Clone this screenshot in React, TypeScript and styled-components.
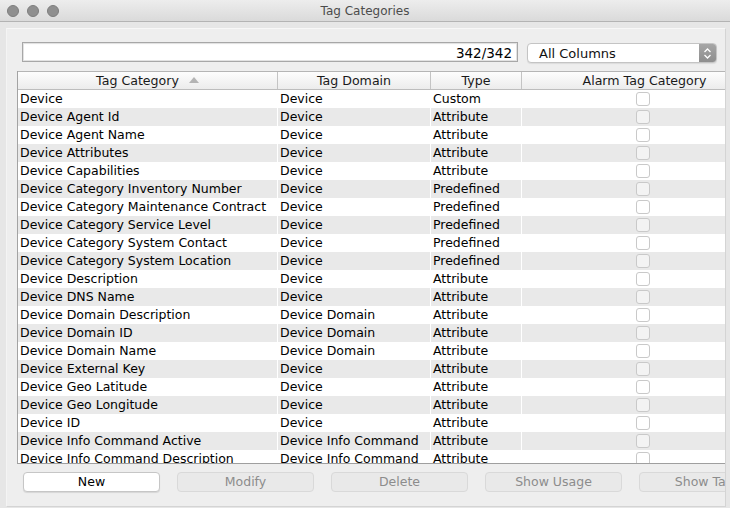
import React from 'react'
import styled, { createGlobalStyle } from 'styled-components'

const GlobalStyle = createGlobalStyle`
  html, body {
    margin: 0;
    padding: 0;
  }
  body {
    width: 730px;
    height: 508px;
    overflow: hidden;
    background: #e6e6e6;
    font-family: "DejaVu Sans", "Liberation Sans", sans-serif;
    -webkit-font-smoothing: antialiased;
  }
`

const Window = styled.div`
  width: 730px;
  height: 508px;
  display: flex;
  flex-direction: column;
`

const TitleBar = styled.div`
  height: 22px;
  box-sizing: border-box;
  flex-shrink: 0;
  position: relative;
  display: flex;
  align-items: center;
  justify-content: center;
  background: linear-gradient(#ededed, #dadada);
  border-bottom: 1px solid #b3b3b3;
`

const Lights = styled.div`
  position: absolute;
  left: 7px;
  top: 5px;
  display: flex;
  gap: 8px;
`

const Light = styled.span`
  width: 12px;
  height: 12px;
  border-radius: 50%;
  box-sizing: border-box;
  background: #8f8f8f;
  border: 1px solid #7d7d7d;
`

const Title = styled.div`
  font-size: 12px;
  color: #4c4c4c;
  margin-top: 1px;
`

const Body = styled.div`
  flex: 1;
  padding: 6px 4px 1px 6px;
  display: flex;
`

const Panel = styled.div`
  flex: 1;
  min-width: 0;
  background: #eeeeee;
  border: 1px solid #d4d4d4;
  border-top-color: #f7f7f7;
  border-left-color: #f4f4f4;
  padding: 13px 0 0 10px;
  overflow: hidden;
  display: flex;
  flex-direction: column;
`

const SearchRow = styled.div`
  display: flex;
  align-items: flex-start;
  gap: 9px;
  margin-left: 5px;
  height: 21px;
  flex-shrink: 0;
`

const SearchField = styled.div`
  width: 496px;
  height: 20px;
  box-sizing: border-box;
  background: #fff;
  border: 1px solid #a7a7a7;
  box-shadow: inset 0 0 0 1px #e2e2e2, inset 0 1px 1px rgba(0, 0, 0, 0.12);
  display: flex;
  align-items: center;
  justify-content: flex-end;
  padding: 1px 5px 0 0;
  font-size: 13.5px;
  color: #000;
`

const Select = styled.div`
  width: 190px;
  height: 20px;
  margin-top: 1px;
  box-sizing: border-box;
  background: #fff;
  border: 1px solid #c4c4c4;
  border-radius: 4px;
  box-shadow: 0 1px 1px rgba(0, 0, 0, 0.08);
  display: flex;
  align-items: center;
  overflow: hidden;
`

const SelectLabel = styled.span`
  flex: 1;
  padding-left: 11px;
  font-size: 13px;
  color: #111;
`

const Stepper = styled.span`
  width: 17px;
  align-self: stretch;
  background: linear-gradient(#a6a6a6, #8e8e8e);
  display: flex;
  align-items: center;
  justify-content: center;
`

const Table = styled.div`
  margin-top: 8px;
  height: 392px;
  flex-shrink: 0;
  border-left: 1px solid #a3a3a3;
  border-bottom: 1px solid #9f9f9f;
  display: flex;
  flex-direction: column;
  overflow: hidden;
`

const cols = '260px 153px 91px 246px'

const HeaderRow = styled.div`
  display: grid;
  grid-template-columns: ${cols};
  height: 19px;
  box-sizing: border-box;
  flex-shrink: 0;
  background: linear-gradient(#fdfdfd, #ececec);
  border-top: 1px solid #b5b5b5;
  border-bottom: 1px solid #bdbdbd;
`

const HeaderCell = styled.div`
  display: flex;
  align-items: center;
  justify-content: center;
  gap: 10px;
  font-size: 12.6px;
  color: #1a1a1a;
  border-right: 1px solid #c4c4c4;
  white-space: nowrap;
`

const SortArrow = styled.span`
  width: 0;
  height: 0;
  border-left: 5px solid transparent;
  border-right: 5px solid transparent;
  border-bottom: 6px solid #b4b4b4;
  margin-bottom: 1px;
`

const Rows = styled.div`
  flex: 1;
  overflow: hidden;
  background: #fff;
`

const Row = styled.div<{ $striped: boolean }>`
  display: grid;
  grid-template-columns: ${cols};
  height: 18px;
  background: ${({ $striped }) => ($striped ? '#e9e9e9' : '#ffffff')};
`

const Cell = styled.div`
  display: flex;
  align-items: center;
  padding: 0 0 2px 2px;
  font-size: 12.5px;
  color: #000;
  white-space: nowrap;
  overflow: hidden;
  border-right: 1px solid #fff;
`

const CheckCell = styled(Cell)`
  justify-content: center;
  padding: 0;
`

const CheckBox = styled.span<{ $striped: boolean }>`
  width: 14px;
  height: 14px;
  box-sizing: border-box;
  border-radius: 3px;
  border: 1px solid #c9c9c9;
  background: ${({ $striped }) => ($striped ? '#f3f3f3' : '#ffffff')};
  margin-left: -3px;
`

const ButtonRow = styled.div`
  display: flex;
  gap: 17px;
  margin: 8px 0 0 6px;
  flex-shrink: 0;
`

const Button = styled.div<{ $disabled?: boolean }>`
  width: 137px;
  height: 20px;
  flex-shrink: 0;
  box-sizing: border-box;
  border-radius: 4px;
  display: flex;
  align-items: center;
  justify-content: center;
  padding-bottom: 1px;
  font-size: 12.5px;
  white-space: nowrap;
  background: ${({ $disabled }) => ($disabled ? '#e9e9e9' : '#ffffff')};
  color: ${({ $disabled }) => ($disabled ? '#8c8c8c' : '#000000')};
  border: 1px solid ${({ $disabled }) => ($disabled ? '#d9d9d9' : '#c6c6c6')};
  box-shadow: ${({ $disabled }) => ($disabled ? 'none' : '0 1px 1px rgba(0,0,0,0.1)')};
`

const rows: [string, string, string][] = [
  ['Device', 'Device', 'Custom'],
  ['Device Agent Id', 'Device', 'Attribute'],
  ['Device Agent Name', 'Device', 'Attribute'],
  ['Device Attributes', 'Device', 'Attribute'],
  ['Device Capabilities', 'Device', 'Attribute'],
  ['Device Category Inventory Number', 'Device', 'Predefined'],
  ['Device Category Maintenance Contract', 'Device', 'Predefined'],
  ['Device Category Service Level', 'Device', 'Predefined'],
  ['Device Category System Contact', 'Device', 'Predefined'],
  ['Device Category System Location', 'Device', 'Predefined'],
  ['Device Description', 'Device', 'Attribute'],
  ['Device DNS Name', 'Device', 'Attribute'],
  ['Device Domain Description', 'Device Domain', 'Attribute'],
  ['Device Domain ID', 'Device Domain', 'Attribute'],
  ['Device Domain Name', 'Device Domain', 'Attribute'],
  ['Device External Key', 'Device', 'Attribute'],
  ['Device Geo Latitude', 'Device', 'Attribute'],
  ['Device Geo Longitude', 'Device', 'Attribute'],
  ['Device ID', 'Device', 'Attribute'],
  ['Device Info Command Active', 'Device Info Command', 'Attribute'],
  ['Device Info Command Description', 'Device Info Command', 'Attribute'],
]

const buttons = [
  { label: 'New' },
  { label: 'Modify', disabled: true },
  { label: 'Delete', disabled: true },
  { label: 'Show Usage', disabled: true },
  { label: 'Show Tags', disabled: true },
]

const App: React.FC = () => (
  <>
    <GlobalStyle />
    <Window>
      <TitleBar>
        <Lights>
          <Light />
          <Light />
          <Light />
        </Lights>
        <Title>Tag Categories</Title>
      </TitleBar>
      <Body>
        <Panel>
          <SearchRow>
            <SearchField>342/342</SearchField>
            <Select>
              <SelectLabel>All Columns</SelectLabel>
              <Stepper>
                <svg width="9" height="13" viewBox="0 0 9 13">
                  <path d="M1.5 5 L4.5 2 L7.5 5 M1.5 8 L4.5 11 L7.5 8" fill="none" stroke="#fff" strokeWidth="1.3" />
                </svg>
              </Stepper>
            </Select>
          </SearchRow>
          <Table>
            <HeaderRow>
              <HeaderCell>
                Tag Category <SortArrow />
              </HeaderCell>
              <HeaderCell>Tag Domain</HeaderCell>
              <HeaderCell>Type</HeaderCell>
              <HeaderCell>Alarm Tag Category</HeaderCell>
            </HeaderRow>
            <Rows>
              {rows.map(([category, domain, type], i) => {
                const striped = i % 2 === 1
                return (
                  <Row key={i} $striped={striped}>
                    <Cell>{category}</Cell>
                    <Cell>{domain}</Cell>
                    <Cell>{type}</Cell>
                    <CheckCell>
                      <CheckBox $striped={striped} />
                    </CheckCell>
                  </Row>
                )
              })}
            </Rows>
          </Table>
          <ButtonRow>
            {buttons.map((b) => (
              <Button key={b.label} $disabled={b.disabled}>
                {b.label}
              </Button>
            ))}
          </ButtonRow>
        </Panel>
      </Body>
    </Window>
  </>
)

export default App
